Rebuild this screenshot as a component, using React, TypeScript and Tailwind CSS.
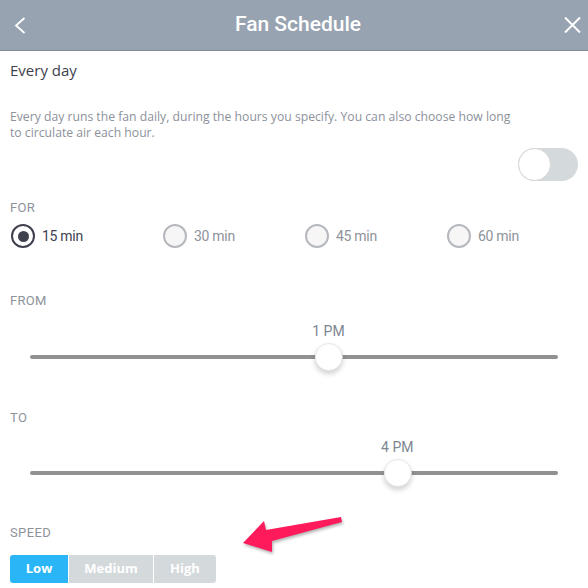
import React, { useState } from "react";

const font = { fontFamily: "Roboto, 'Liberation Sans', sans-serif" };
const wide = { fontFamily: "'Open Sans', 'Liberation Sans', sans-serif" };

function TimeSlider({ hour, value }: { hour: string; value: number }) {
  const pct = (value / 23) * 100;
  return (
    <div className="px-[30px]">
      <div className="relative h-[50px]">
        <div className="absolute left-0 right-0 top-[31px] h-[4px] rounded-full bg-[#919191]" />
        <div className="absolute top-0 -translate-x-1/2 flex flex-col items-center" style={{ left: `${pct}%` }}>
          <span className="text-[14px] leading-[14px] text-[#7d8690]">{hour}</span>
          <span className="mt-[5px] block h-[28px] w-[28px] rounded-full border border-[#e6e6e6] bg-white shadow-[0_3px_5px_rgba(0,0,0,0.18)]" />
        </div>
      </div>
    </div>
  );
}

export default function App() {
  const [duration, setDuration] = useState("15 min");
  const [speed, setSpeed] = useState("Low");
  const widths = ["w-[152px]", "w-[142px]", "w-[142px]", "w-[120px]"];

  return (
    <div className="h-[588px] w-[588px] overflow-hidden bg-white" style={font}>
      {/* Header */}
      <div className="flex h-[51px] items-center justify-between border-b border-[#7e8a97] bg-[#97a3b0] pl-[14px] pr-[7px] text-white">
        <svg width="12" height="17" viewBox="0 0 12 17" fill="none" stroke="white" strokeWidth="1.8">
          <path d="M10.5 1 L2 8.5 L10.5 16" />
        </svg>
        <span className="ml-[6px] text-[21px] font-medium">Fan Schedule</span>
        <svg width="17" height="16" viewBox="0 0 17 16" fill="none" stroke="white" strokeWidth="2">
          <path d="M1 0.5 L16 15.5 M16 0.5 L1 15.5" />
        </svg>
      </div>

      <div className="px-[10px]">
        <div className="pt-[10px] text-[15px] leading-[18px] text-[#3d3f4c]" style={wide}>Every day</div>

        <p className="mt-[30px] max-w-[505px] text-[12.2px] leading-[16px] text-[#8c919b]" style={wide}>
          Every day runs the fan daily, during the hours you specify. You can also choose how long to circulate air each hour.
        </p>

        {/* Toggle */}
        <div className="mt-[7px] flex justify-end">
          <div className="flex h-[33px] w-[60px] items-center rounded-full bg-[#d4d9dc]">
            <span className="h-[33px] w-[33px] rounded-full border border-[#d8d8d8] bg-white" />
          </div>
        </div>

        {/* FOR */}
        <div className="mt-[20px] text-[13px] leading-[14px] tracking-[0.3px] text-[#8d939b]">FOR</div>
        <div className="mt-[9px] flex">
          {["15 min", "30 min", "45 min", "60 min"].map((d, i) => (
            <button
              key={d}
              onClick={() => setDuration(d)}
              className={`flex items-center gap-[7px] pl-px ${widths[i]}`}
            >
              <span
                className={`flex h-[24px] w-[24px] items-center justify-center rounded-full border-2 ${
                  duration === d ? "border-[#40414f] bg-white" : "border-[#b5b8bc] bg-[#f6f6f6]"
                }`}
              >
                {duration === d && <span className="h-[11px] w-[11px] rounded-full bg-[#40414f]" />}
              </span>
              <span className={`text-[14px] tracking-[-0.3px] ${duration === d ? "text-[#40414f]" : "text-[#8d939b]"}`}>{d}</span>
            </button>
          ))}
        </div>
      </div>

      {/* FROM */}
      <div className="mt-[46px] px-[10px] text-[13px] leading-[14px] tracking-[0.3px] text-[#8d939b]">FROM</div>
      <div className="mt-[16px]">
        <TimeSlider hour="1 PM" value={13} />
      </div>

      {/* TO */}
      <div className="mt-[37px] px-[10px] text-[13px] leading-[14px] tracking-[0.3px] text-[#8d939b]">TO</div>
      <div className="mt-[15px]">
        <TimeSlider hour="4 PM" value={16} />
      </div>

      {/* SPEED */}
      <div className="relative">
        <div className="mt-[36px] px-[10px] text-[13px] leading-[14px] tracking-[0.4px] text-[#8d939b]">SPEED</div>
        <div className="mt-[15px] flex px-[10px]" style={wide}>
          {["Low", "Medium", "High"].map((s, i) => (
            <button
              key={s}
              onClick={() => setSpeed(s)}
              className={`h-[28px] text-[13px] font-bold text-white ${
                i === 0 ? "w-[58px] rounded-l-[3px]" : i === 1 ? "ml-px w-[84px]" : "ml-px w-[62px] rounded-r-[3px]"
              } ${speed === s ? "bg-[#29b5f6]" : "bg-[#d4d9dc]"}`}
            >
              {s}
            </button>
          ))}
        </div>
        <svg
          className="absolute left-[238px] top-[-16px]"
          width="110"
          height="45"
          viewBox="238 510 110 45"
          style={{ filter: "drop-shadow(1px 2px 1.5px rgba(0,0,0,0.3))" }}
        >
          <path d="M243 543 L264 521 L266 530 L341 517 L342 522 L272 541 L272 552 Z" fill="#ff1a5c" />
        </svg>
      </div>
    </div>
  );
}
